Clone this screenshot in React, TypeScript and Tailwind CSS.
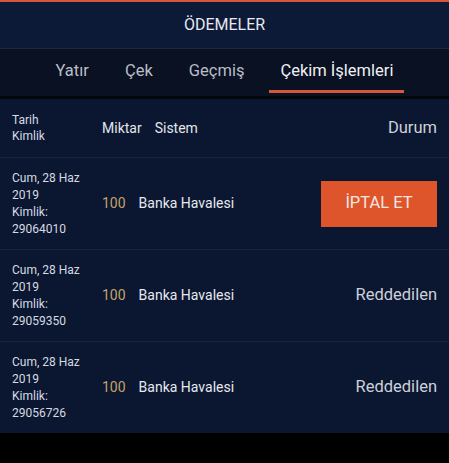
import React from "react";

const rows = [
  { id: "29064010", status: "cancel" },
  { id: "29059350", status: "Reddedilen" },
  { id: "29056726", status: "Reddedilen" },
];

export default function App() {
  return (
    <div
      className="w-[449px] h-[463px] bg-black flex flex-col"
      style={{ fontFamily: "Roboto, 'Noto Sans', sans-serif" }}
    >
      <div className="h-[2px] bg-[#d4583a]" />
      <div className="h-[46px] bg-[#0c1a37] flex items-center justify-center text-[16px] text-[#e6e9ef]">
        ÖDEMELER
      </div>
      <div className="h-[1px] bg-[#1e2740]" />
      <div className="h-[47px] bg-[#0a1122] flex justify-center gap-[14px] text-[16.5px]">
        {["Yatır", "Çek", "Geçmiş", "Çekim İşlemleri"].map((t, i) => (
          <div key={t} className="relative px-[11px] flex items-center pb-[3px]">
            <span className={i === 3 ? "text-[#eef0f4]" : "text-[#b9bec8]"}>{t}</span>
            {i === 3 && (
              <div className="absolute left-0 right-0 bottom-[3px] h-[3px] bg-[#d4583a]" />
            )}
          </div>
        ))}
      </div>
      <div className="h-[3px] bg-[#03060d]" />
      <div className="bg-[#0b1630]">
        <div className="h-[59px] flex items-center pl-[12px] pr-[12px] border-b border-[#17223c]">
          <div className="w-[90px] text-[12px] leading-[16px] text-[#d6dae2]">
            <div>Tarih</div>
            <div>Kimlik</div>
          </div>
          <div className="text-[14px] text-[#e3e6ec]">Miktar</div>
          <div className="ml-[13px] text-[14px] text-[#e3e6ec]">Sistem</div>
          <div className="ml-auto text-[16.5px] text-[#cdd1da]">Durum</div>
        </div>
        {rows.map((r, i) => (
          <div
            key={r.id}
            className={
              "flex items-center pl-[12px] pr-[12px] " +
              (i < rows.length - 1 ? "h-[92px] border-b border-[#17223c]" : "h-[91px]")
            }
          >
            <div className="w-[90px] text-[12px] leading-[17px] text-[#d6dae2]">
              <div>Cum, 28 Haz</div>
              <div>2019</div>
              <div>Kimlik:</div>
              <div>{r.id}</div>
            </div>
            <div className="text-[14px] text-[#c4a46a]">100</div>
            <div className="ml-[13px] text-[14px] text-[#e6e9ef]">Banka Havalesi</div>
            <div className="ml-auto">
              {r.status === "cancel" ? (
                <div className="w-[116px] h-[46px] bg-[#df552b] flex items-center justify-center text-[16.5px] text-[#f4e6e0]">
                  İPTAL ET
                </div>
              ) : (
                <div className="text-[16.5px] text-[#cdd1da]">{r.status}</div>
              )}
            </div>
          </div>
        ))}
      </div>
    </div>
  );
}
